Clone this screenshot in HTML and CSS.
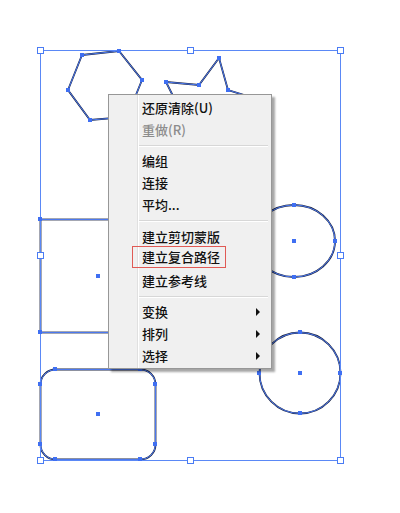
FILE: index.html
```html
<!DOCTYPE html>
<html lang="zh">
<head>
<meta charset="utf-8">
<link rel="stylesheet" href="styles.css">
</head>
<body>
<div class="stage">
  <svg class="art" width="400" height="513" viewBox="0 0 400 513">
    <g class="path-under">
      <polygon points="82,55 119,51 142,80 127,117 90,120 68,90"/>
      <polygon points="166,82 199,85 219,58 228,90 260,100 240,130 200,125 175,100"/>
      <rect x="40.5" y="219.5" width="115.5" height="113"/>
      <rect x="40.5" y="369.5" width="115" height="90" rx="15" ry="15"/>
      <ellipse cx="294" cy="241" rx="41" ry="36"/>
      <circle cx="300" cy="373" r="40.5"/>
    </g>
    <g class="path-over">
      <polygon points="82,55 119,51 142,80 127,117 90,120 68,90"/>
      <polygon points="166,82 199,85 219,58 228,90 260,100 240,130 200,125 175,100"/>
      <rect x="40.5" y="219.5" width="115.5" height="113"/>
      <rect x="40.5" y="369.5" width="115" height="90" rx="15" ry="15"/>
      <ellipse cx="294" cy="241" rx="41" ry="36"/>
      <circle cx="300" cy="373" r="40.5"/>
    </g>
    <rect class="bbox" x="40.5" y="50.5" width="300" height="410"/>
    <g class="anchor">
      <rect x="80" y="53" width="4" height="4"/>
      <rect x="117" y="49" width="4" height="4"/>
      <rect x="140" y="78" width="4" height="4"/>
      <rect x="66" y="88" width="4" height="4"/>
      <rect x="88" y="118" width="4" height="4"/>
      <rect x="164" y="80" width="4" height="4"/>
      <rect x="197" y="83" width="4" height="4"/>
      <rect x="217" y="56" width="4" height="4"/>
      <rect x="226" y="88" width="4" height="4"/>
      <rect x="38" y="217" width="4" height="4"/>
      <rect x="38" y="330" width="4" height="4"/>
      <rect x="53" y="367" width="4" height="4"/>
      <rect x="138" y="367" width="4" height="4"/>
      <rect x="153" y="382" width="4" height="4"/>
      <rect x="153" y="442" width="4" height="4"/>
      <rect x="138" y="457" width="4" height="4"/>
      <rect x="53" y="457" width="4" height="4"/>
      <rect x="38" y="382" width="4" height="4"/>
      <rect x="38" y="442" width="4" height="4"/>
      <rect x="292" y="203" width="4" height="4"/>
      <rect x="292" y="275" width="4" height="4"/>
      <rect x="333" y="239" width="4" height="4"/>
      <rect x="298" y="330" width="4" height="4"/>
      <rect x="298" y="411" width="4" height="4"/>
      <rect x="257" y="371" width="4" height="4"/>
      <rect x="338" y="371" width="4" height="4"/>
      <rect x="96" y="274" width="4" height="4"/>
      <rect x="96" y="412" width="4" height="4"/>
      <rect x="292" y="239" width="4" height="4"/>
      <rect x="298" y="371" width="4" height="4"/>
    </g>
    <g class="handle">
      <rect x="37.5" y="47.5" width="6" height="6"/>
      <rect x="187.5" y="47.5" width="6" height="6"/>
      <rect x="337.5" y="47.5" width="6" height="6"/>
      <rect x="37.5" y="252.5" width="6" height="6"/>
      <rect x="337.5" y="252.5" width="6" height="6"/>
      <rect x="37.5" y="457.5" width="6" height="6"/>
      <rect x="187.5" y="457.5" width="6" height="6"/>
      <rect x="337.5" y="457.5" width="6" height="6"/>
    </g>
  </svg>

  <div class="menu">
    <div class="item">还原清除(U)</div>
    <div class="item disabled">重做(R)</div>
    <div class="sep"></div>
    <div class="item">编组</div>
    <div class="item">连接</div>
    <div class="item">平均...</div>
    <div class="sep sep-wide"></div>
    <div class="item">建立剪切蒙版</div>
    <div class="item"><span class="marked">建立复合路径</span></div>
    <div class="item">建立参考线</div>
    <div class="sep"></div>
    <div class="item sub">变换</div>
    <div class="item sub">排列</div>
    <div class="item sub">选择</div>
  </div>
</div>
</body>
</html>
```

FILE: styles.css
```css
html, body {
  margin: 0;
  padding: 0;
  background: #ffffff;
}

.stage {
  position: relative;
  width: 400px;
  height: 513px;
  overflow: hidden;
}

.art {
  display: block;
}

.path-under {
  fill: none;
  stroke: #1c2440;
  stroke-width: 1.8;
}

.path-over {
  fill: none;
  stroke: #4b78ee;
  stroke-width: 1;
}

.bbox {
  fill: none;
  stroke: #5a88f6;
  stroke-width: 1;
}

.anchor rect {
  fill: #3f6ff2;
}

.handle rect {
  fill: #ffffff;
  stroke: #4a7cf4;
  stroke-width: 1;
}

.menu {
  position: absolute;
  left: 108px;
  top: 94px;
  width: 164px;
  height: 275px;
  box-sizing: border-box;
  border: 1px solid #979797;
  background: #f0f0f0;
  box-shadow: 3px 3px 2px rgba(0, 0, 0, 0.35);
  padding: 2px 0 1px 0;
  font-family: "Noto Sans CJK SC", "Microsoft YaHei", sans-serif;
  font-size: 13px;
  font-weight: 500;
  color: #111111;
  background-image: linear-gradient(to right, transparent 28px, #e0e0e0 28px, #e0e0e0 29px, #ffffff 29px, #ffffff 30px, transparent 30px);
}

.item {
  height: 22px;
  line-height: 22px;
  padding-left: 33px;
  display: flex;
  align-items: center;
  white-space: nowrap;
}

.item.disabled {
  color: #8c8c8c;
}

.item.sub::after {
  content: "";
  margin-left: auto;
  margin-right: 11px;
  width: 0;
  height: 0;
  border-top: 4px solid transparent;
  border-bottom: 4px solid transparent;
  border-left: 4px solid #111111;
}

.sep {
  height: 9px;
  margin-left: 30px;
  margin-right: 3px;
  background: linear-gradient(to bottom, transparent 4px, #d7d7d7 4px, #d7d7d7 5px, #ffffff 5px, #ffffff 6px, transparent 6px);
}

.sep.sep-wide {
  height: 10px;
}

.marked {
  display: inline-block;
  box-sizing: border-box;
  height: 22px;
  line-height: 20px;
  margin-left: -10px;
  margin-bottom: 4px;
  padding: 0 5px 0 9px;
  border: 1px solid #e05a55;
}
```
